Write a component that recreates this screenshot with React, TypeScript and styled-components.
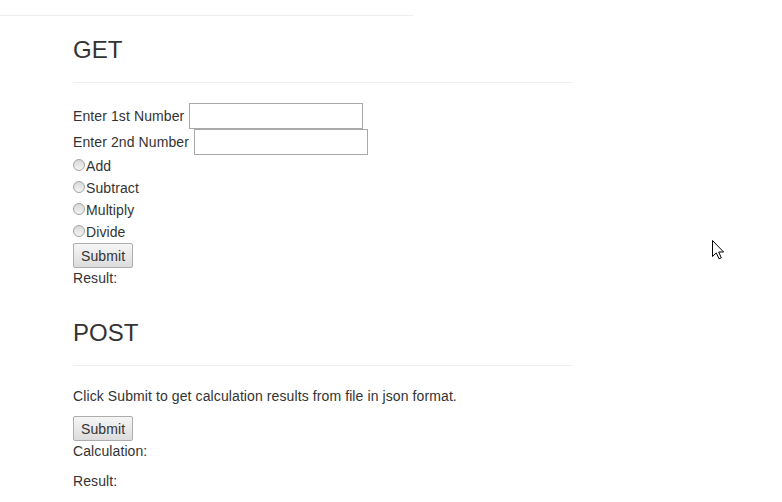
import styled, { createGlobalStyle } from "styled-components";

const GlobalStyle = createGlobalStyle`
  html, body {
    margin: 0;
    padding: 0;
    background: #fff;
  }
  body {
    font-family: "Liberation Sans", Arial, Helvetica, sans-serif;
    font-size: 14px;
    line-height: 20px;
    letter-spacing: 0.1px;
    color: #333;
  }
`;

const operations = ["Add", "Subtract", "Multiply", "Divide"];

const App = () => {
  return (
    <Page>
      <GlobalStyle />
      <TopRule />
      <Container>
        <PageHeader>
          <Heading>GET</Heading>
        </PageHeader>
        <FieldRow>
          <span>Enter 1st Number</span>
          <NumberInput type="text" />
        </FieldRow>
        <FieldRow>
          <span>Enter 2nd Number</span>
          <NumberInput type="text" />
        </FieldRow>
        {operations.map((op) => (
          <RadioRow key={op}>
            <Radio type="radio" name="operation" value={op.toLowerCase()} />
            <span>{op}</span>
          </RadioRow>
        ))}
        <SubmitBtn type="button">Submit</SubmitBtn>
        <Text $spaced>Result:</Text>

        <PageHeader $top={31}>
          <Heading>POST</Heading>
        </PageHeader>
        <Text $spaced>Click Submit to get calculation results from file in json format.</Text>
        <SubmitBtn type="button">Submit</SubmitBtn>
        <Text $spaced>Calculation:</Text>
        <Text>Result:</Text>
      </Container>
      <Cursor width="13" height="20" viewBox="0 0 13 20">
        <path
          d="M0.5 0.5 L0.5 16.5 L4.3 12.9 L7 18.8 L9.3 17.8 L6.7 12 L11.6 12 Z"
          fill="#fff"
          stroke="#000"
          strokeWidth="1"
          strokeLinejoin="miter"
        />
      </Cursor>
    </Page>
  );
};

const Page = styled.div`
  position: relative;
  min-height: 502px;
`;

const TopRule = styled.div`
  width: 413px;
  height: 15px;
  border-bottom: 1px solid #eee;
`;

const Container = styled.div`
  width: 500px;
  padding-left: 73px;
`;

const PageHeader = styled.div<{ $top?: number }>`
  margin-top: ${({ $top }) => $top ?? 20}px;
  margin-bottom: 20px;
  padding-bottom: 9px;
  border-bottom: 1px solid #eee;
`;

const Heading = styled.h3`
  margin: 0 0 10px;
  font-size: 24px;
  line-height: 27px;
  font-weight: 500;
  letter-spacing: 0;
  color: #333;
`;

const FieldRow = styled.div`
  display: flex;
  align-items: center;
  gap: 5px;
  height: 26px;
`;

const NumberInput = styled.input`
  box-sizing: border-box;
  width: 174px;
  height: 26px;
  margin: 0;
  padding: 1px 3px;
  border: 1px solid #a9a9a9;
  border-radius: 0;
  background: #fff;
  font: inherit;
  outline: none;
`;

const RadioRow = styled.label`
  display: flex;
  align-items: center;
  height: 22px;
`;

const Radio = styled.input`
  appearance: none;
  box-sizing: border-box;
  width: 12px;
  height: 12px;
  margin: -2px 1px 0 0;
  border: 1px solid #a3a3a3;
  border-radius: 50%;
  background: linear-gradient(#d8d8d8, #f4f4f4);
`;

const SubmitBtn = styled.button`
  display: block;
  box-sizing: border-box;
  height: 25px;
  margin: 0;
  padding: 0 7px;
  border: 1px solid #adadad;
  border-radius: 2px;
  background: linear-gradient(#f6f6f6, #dcdcdc);
  font-family: inherit;
  font-size: 14px;
  letter-spacing: 0.1px;
  color: #333;
`;

const Text = styled.p<{ $spaced?: boolean }>`
  margin: 0 0 ${({ $spaced }) => ($spaced ? 10 : 0)}px;
`;

const Cursor = styled.svg`
  position: absolute;
  left: 712px;
  top: 240px;
`;

export default App;
